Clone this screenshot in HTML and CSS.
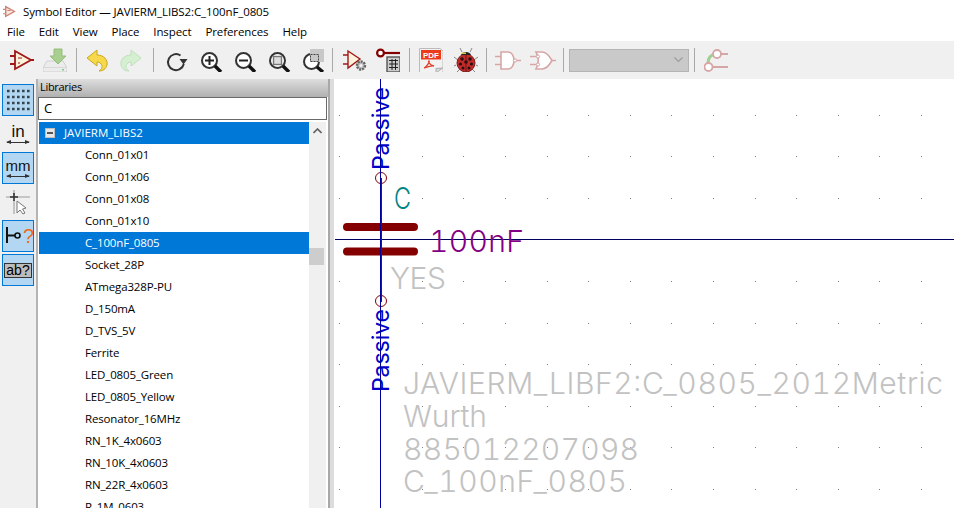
FILE: index.html
```html
<!DOCTYPE html>
<html lang="en">
  <head>
    <meta charset="UTF-8" />
    <title>Symbol Editor</title>
    <link rel="stylesheet" href="styles.css">
  </head>
  <body>
    <div class="titlebar">
      <svg class="app-icon" width="13" height="13" viewBox="0 0 12 12">
        <path d="M2.5 1.5 10.5 6 2.5 10.5Z" fill="#fbe6dc" stroke="#cc8478" stroke-width="1.3" />
        <path d="M0 4H2.5M0 8H2.5M4 5H7" stroke="#cc8478" />
      </svg>
      <span>Symbol Editor — JAVIERM_LIBS2:C_100nF_0805</span>
    </div>
    <div class="menubar">
      <span>File</span>
      <span>Edit</span>
      <span>View</span>
      <span>Place</span>
      <span>Inspect</span>
      <span>Preferences</span>
      <span>Help</span>
    </div>
    <div class="toolbar">
      <svg class="tool" viewBox="0 0 24 24">
        <path d="M5 3 21 12 5 21Z" fill="#fdf3dc" stroke="#a01818" stroke-width="1.8" />
        <path d="M0 8H5M0 16H5M21 12H24" stroke="#a01818" stroke-width="1.8" />
        <path d="M8 10H12M8 15H10" stroke="#a01818" />
      </svg>
      <svg class="tool g9" viewBox="0 0 24 24">
        <path d="M4 13H20L24 20V24H0V20Z" fill="#ececec" stroke="#cfcfcf" />
        <path d="M1 19.5H23" stroke="#d8d8d8" />
        <rect x="19" y="21" width="2" height="1.5" fill="#7fce7f" />
        <path d="M11 1H19V8H23L15 16 7 8H11Z" fill="#a9cf8f" stroke="#96bd80" />
      </svg>
      <i class="sep mr7"></i>
      <svg class="tool" viewBox="0 0 24 24">
        <path d="M3 10 13 2V7C20 7 24 12 23 17 22 21 19 23 15 23 18 21 19 18 17 16 16 14 14 14 13 14V18Z" fill="#f6d84a" stroke="#c8a820" />
      </svg>
      <svg class="tool g12" viewBox="0 0 24 24">
        <path d="M21 10 11 2V7C4 7 0 12 1 17 2 21 5 23 9 23 6 21 5 18 7 16 8 14 10 14 11 14V18Z" fill="#d4f0d0" stroke="#bfe0bc" />
      </svg>
      <i class="sep mr10"></i>
      <svg class="tool" viewBox="0 0 24 24">
        <path d="M16.5 7.5A8 8 0 1 0 19.8 16" fill="none" stroke="#333" stroke-width="2" />
        <path d="M15.5 11H23.5L19.5 16.5Z" fill="#333" />
      </svg>
      <svg class="tool g11" viewBox="0 0 24 24">
        <circle cx="10.5" cy="12.5" r="7.5" fill="#fff" stroke="#333" stroke-width="2" />
        <path d="M16 18 22 24" stroke="#111" stroke-width="3.4" />
        <path d="M6 12.5H15M10.5 8V17" stroke="#222" stroke-width="2" />
      </svg>
      <svg class="tool g10" viewBox="0 0 24 24">
        <circle cx="10.5" cy="12.5" r="7.5" fill="#fff" stroke="#333" stroke-width="2" />
        <path d="M16 18 22 24" stroke="#111" stroke-width="3.4" />
        <path d="M6 12.5H15" stroke="#222" stroke-width="2" />
      </svg>
      <svg class="tool g10" viewBox="0 0 24 24">
        <circle cx="10.5" cy="12.5" r="7.5" fill="#fff" stroke="#333" stroke-width="2" />
        <path d="M16 18 22 24" stroke="#111" stroke-width="3.4" />
        <rect x="6.5" y="8.5" width="8" height="8" fill="#ddd" stroke="#777" stroke-width="1.4" />
      </svg>
      <svg class="tool g11" viewBox="0 0 24 24">
        <circle cx="9.5" cy="13.5" r="7.5" fill="#fff" stroke="#333" stroke-width="2" />
        <path d="M15 19 21 24" stroke="#111" stroke-width="3.4" />
        <rect x="8" y="1" width="14" height="13" fill="#c8c8c8" />
        <rect x="8.5" y="6.5" width="8" height="7" fill="none" stroke="#444" stroke-dasharray="2 1" />
      </svg>
      <i class="sep ml6 mr10"></i>
      <svg class="tool" viewBox="0 0 24 24">
        <path d="M5 3 17 11 5 20Z" fill="#fdf3dc" stroke="#a01818" stroke-width="1.4" />
        <path d="M0 7H5M0 16H5" stroke="#a01818" stroke-width="1.4" />
        <circle cx="18" cy="17.5" r="4" fill="#bbb" stroke="#666" stroke-width="2.4" stroke-dasharray="2 1" />
        <circle cx="18" cy="17.5" r="1.6" fill="#f0f0f0" />
      </svg>
      <svg class="tool g9" viewBox="0 0 24 24">
        <circle cx="4.5" cy="5" r="3.4" fill="#fff" stroke="#840000" stroke-width="2.2" />
        <path d="M8 5H24" stroke="#840000" stroke-width="2.2" />
        <rect x="11" y="9" width="13" height="15" fill="#ccc" stroke="#555" stroke-width="1.4" />
        <path d="M13 12.5H22M13 16H22M13 19.5H22M16 11V22M19.5 11V22" stroke="#222" />
      </svg>
      <i class="sep"></i>
      <svg class="tool" viewBox="0 0 24 24">
        <path d="M.5 .5H21L24 3V25H.5Z" fill="#f2f2f2" stroke="#bbb" />
        <rect x="2" y="2" width="20" height="9.5" fill="#ec3a1c" />
        <text class="pdf-label" x="12" y="10">PDF</text>
        <path d="M5 20C8 19 11 13 10 13 9 13 10 17 15 18 12 17 8 19 5 20Z" fill="none" stroke="#e0402a" stroke-width="1.3" />
        <path d="M17 25V20.5L23.5 20Z" fill="#ddd" stroke="#aaa" />
      </svg>
      <svg class="tool g11" viewBox="0 0 24 24">
        <path d="M4 12 0 9M2 17 0 18M6 21 3 24M20 12 24 9M22 17 24 18M18 21 21 24M8 4 6 0M16 4 18 0" stroke="#888" />
        <ellipse cx="12" cy="15" rx="9" ry="9" fill="#c42a2a" stroke="#7a2020" />
        <path d="M7 7C8 3 16 3 17 7Z" fill="#222" />
        <path d="M8 4.5H12V6H8Z" fill="#d8c84a" />
        <path d="M12 7V24" stroke="#6a1818" />
        <g fill="#2a1010">
          <circle cx="8" cy="11" r="1.8" />
          <circle cx="16" cy="11" r="1.8" />
          <circle cx="6.5" cy="16" r="1.6" />
          <circle cx="17.5" cy="16" r="1.6" />
          <circle cx="12" cy="14" r="1.8" />
          <circle cx="9" cy="20" r="1.5" />
          <circle cx="15" cy="20" r="1.5" />
        </g>
      </svg>
      <i class="sep ml8 mr8"></i>
      <svg class="tool wide" viewBox="0 0 26 24">
        <path d="M6 4H13C21 4 21 21 13 21H6Z" fill="#fff" stroke="#d6a6a6" stroke-width="1.6" />
        <path d="M0 8.5H6M0 16.5H6M21 12.5H26" stroke="#d6a6a6" stroke-width="1.6" />
        <circle cx="20" cy="12.5" r="1.6" fill="#fff" stroke="#d6a6a6" />
      </svg>
      <svg class="tool wide g9" viewBox="0 0 26 24">
        <path d="M6 4H12C17 4 20 9 22 12.5 20 16 17 21 12 21H6C9 16 9 9 6 4Z" fill="#fff" stroke="#d6a6a6" stroke-width="1.6" />
        <path d="M0 8.5H7M0 16.5H7M22 12.5H26" stroke="#d6a6a6" stroke-width="1.6" />
        <circle cx="8" cy="8.5" r="1.6" fill="#fff" stroke="#d6a6a6" />
        <circle cx="8" cy="16.5" r="1.6" fill="#fff" stroke="#d6a6a6" />
      </svg>
      <i class="sep ml7 mr5"></i>
      <div class="combo">
        <svg width="9" height="6" viewBox="0 0 9 6"><path d="M.5 .5 4.5 4.5 8.5 .5" fill="none" stroke="#9c9c9c" stroke-width="1.2" /></svg>
      </div>
      <i class="sep ml5"></i>
      <svg class="tool" viewBox="0 0 24 24">
        <path d="M4 15C4 10 7 7 11 6" fill="none" stroke="#a0d090" stroke-width="3" />
        <circle cx="13" cy="6" r="4" fill="#fff" stroke="#d6a6a6" stroke-width="1.8" />
        <circle cx="4.5" cy="19" r="4" fill="#fff" stroke="#d6a6a6" stroke-width="1.8" />
        <path d="M17 6H24M8.5 19H24" stroke="#d6a6a6" stroke-width="1.8" />
      </svg>
    </div>
    <div class="main">
      <div class="lefttools">
        <div class="side-btn on">
          <svg width="24" height="24" viewBox="0 0 24 24">
            <path d="M1 3H24M1 9H24M1 15H24M1 21H24" stroke="#33434f" stroke-width="2.6" stroke-dasharray="2.6 2.4" />
          </svg>
        </div>
        <div class="side-btn unit"><b class="in">in</b><i class="arrows"></i></div>
        <div class="side-btn unit on"><b>mm</b><i class="arrows"></i></div>
        <div class="side-btn">
          <svg width="26" height="26" viewBox="0 0 26 26">
            <path d="M1 8H25M9 1V6M9 11V25" stroke="#b8b8b8" stroke-width="1.6" />
            <path d="M5 8H13M9 4V12" stroke="#333" stroke-width="1.6" />
            <path d="M12 12V24L15 21 18 25 20 24 17.5 20 21 19Z" fill="#fff" stroke="#777" />
          </svg>
        </div>
        <div class="side-btn on">
          <svg width="30" height="24" viewBox="0 0 30 24">
            <path d="M4 3V19M4 11.5H12" stroke="#111" stroke-width="2" />
            <circle cx="14.5" cy="11.5" r="2.5" fill="none" stroke="#111" stroke-width="1.6" />
            <text class="pin-q" x="20" y="19">?</text>
          </svg>
        </div>
        <div class="side-btn on"><span class="abq">ab?</span></div>
      </div>
      <div class="panel">
        <div class="panel-head">Libraries</div>
        <div class="search">C</div>
        <div class="tree">
          <div class="rows">
            <div class="row root sel"><i class="minus"></i>JAVIERM_LIBS2</div>
            <div class="row">Conn_01x01</div>
            <div class="row">Conn_01x06</div>
            <div class="row">Conn_01x08</div>
            <div class="row">Conn_01x10</div>
            <div class="row sel">C_100nF_0805</div>
            <div class="row">Socket_28P</div>
            <div class="row">ATmega328P-PU</div>
            <div class="row">D_150mA</div>
            <div class="row">D_TVS_5V</div>
            <div class="row">Ferrite</div>
            <div class="row">LED_0805_Green</div>
            <div class="row">LED_0805_Yellow</div>
            <div class="row">Resonator_16MHz</div>
            <div class="row">RN_1K_4x0603</div>
            <div class="row">RN_10K_4x0603</div>
            <div class="row">RN_22R_4x0603</div>
            <div class="row">R_1M_0603</div>
          </div>
          <div class="scroll">
            <svg class="scroll-up" width="9" height="6" viewBox="0 0 9 6"><path d="M.5 5 4.5 1 8.5 5" fill="none" stroke="#606060" stroke-width="1.6" /></svg>
            <div class="thumb"></div>
          </div>
        </div>
      </div>
      <i class="sash"></i>
      <svg class="canvas" viewBox="334 79 620 429" width="620" height="429">
        <defs>
          <g id="dots">
            <rect x="339" width="1" height="1" /><rect x="422" width="1" height="1" />
            <rect x="463" width="1" height="1" /><rect x="505" width="1" height="1" />
            <rect x="547" width="1" height="1" /><rect x="588" width="1" height="1" />
            <rect x="630" width="1" height="1" /><rect x="671" width="1" height="1" />
            <rect x="713" width="1" height="1" /><rect x="755" width="1" height="1" />
            <rect x="796" width="1" height="1" /><rect x="838" width="1" height="1" />
            <rect x="879" width="1" height="1" /><rect x="921" width="1" height="1" />
          </g>
        </defs>
        <g class="grid">
          <use href="#dots" y="115" /><use href="#dots" y="156" /><use href="#dots" y="198" />
          <use href="#dots" y="239" /><use href="#dots" y="281" /><use href="#dots" y="323" />
          <use href="#dots" y="364" /><use href="#dots" y="406" /><use href="#dots" y="447" />
          <use href="#dots" y="489" />
        </g>
        <path d="M335 239.5H954" stroke="#000060" />
        <path d="M381 178V302" stroke="#840000" stroke-width="2" />
        <path d="M347 227H414M347 251.6H414" stroke="#840000" stroke-width="8" stroke-linecap="round" />
        <circle cx="381" cy="178" r="5.5" fill="none" stroke="#840000" />
        <circle cx="381" cy="301" r="5.5" fill="none" stroke="#840000" />
        <text class="pin-type" transform="translate(388.5 170) rotate(-90)" textLength="83" lengthAdjust="spacing">Passive</text>
        <text class="pin-type" transform="translate(388.5 392) rotate(-90)" textLength="83" lengthAdjust="spacing">Passive</text>
        <path d="M380.5 79V508" stroke="#0000a0" />
        <text class="field ref" x="394" y="209" textLength="17" lengthAdjust="spacingAndGlyphs">C</text>
        <text class="field val" x="429" y="252" textLength="95" lengthAdjust="spacing">100nF</text>
        <text class="field dim" x="390" y="289" textLength="56" lengthAdjust="spacing">YES</text>
        <text class="field dim" x="403" y="394" textLength="540" lengthAdjust="spacing">JAVIERM_LIBF2:C_0805_2012Metric</text>
        <text class="field dim" x="403" y="427" textLength="84" lengthAdjust="spacing">Wurth</text>
        <text class="field dim" x="403" y="460" textLength="236" lengthAdjust="spacing">885012207098</text>
        <text class="field dim" x="403" y="492" textLength="224" lengthAdjust="spacing">C_100nF_0805</text>
      </svg>
    </div>
  </body>
</html>
```

FILE: styles.css
```css
body {
  margin: 0;
  width: 954px;
  height: 508px;
  overflow: hidden;
  background: #fff;
  color: #000;
  font-family: "Open Sans", "Noto Sans", sans-serif;
  font-size: 11.5px;
  display: flex;
  flex-direction: column;
}

.titlebar {
  height: 22px;
  display: flex;
  align-items: center;
  gap: 7px;
  padding-left: 3px;
  letter-spacing: -0.1px;
}

.menubar {
  height: 19px;
  display: flex;
  align-items: center;
  gap: 14px;
  padding-left: 7px;
  letter-spacing: -0.1px;
}

.toolbar {
  height: 38px;
  background: #f0f0f0;
  display: flex;
  align-items: center;
  padding-left: 10px;
}

.tool {
  width: 24px;
  height: 24px;
  flex: none;
}

.tool.wide {
  width: 26px;
}

.g9 {
  margin-left: 9px;
}

.g10 {
  margin-left: 10px;
}

.g11 {
  margin-left: 11px;
}

.g12 {
  margin-left: 12px;
}

.sep {
  width: 1px;
  height: 24px;
  background: #a8a8a8;
  margin: 0 9px;
  flex: none;
}

.ml5 {
  margin-left: 5px;
}

.ml6 {
  margin-left: 6px;
}

.ml7 {
  margin-left: 7px;
}

.ml8 {
  margin-left: 8px;
}

.mr5 {
  margin-right: 5px;
}

.mr7 {
  margin-right: 7px;
}

.mr8 {
  margin-right: 8px;
}

.mr10 {
  margin-right: 10px;
}

.pdf-label {
  font-family: "Liberation Sans", sans-serif;
  font-size: 8px;
  font-weight: bold;
  fill: #fff;
  text-anchor: middle;
}

.combo {
  width: 120px;
  height: 23px;
  box-sizing: border-box;
  background: #c9c9c9;
  border: 1px solid #b4b4b4;
  display: flex;
  align-items: center;
  justify-content: flex-end;
  padding-right: 5px;
}

.main {
  flex: 1;
  display: flex;
  min-height: 0;
}

.lefttools {
  width: 36px;
  flex: none;
  background: #f0f0f0;
  border-right: 2px solid #b4b4b4;
  display: flex;
  flex-direction: column;
  align-items: center;
  gap: 2px;
  padding-top: 5px;
}

.side-btn {
  width: 32px;
  height: 32px;
  box-sizing: border-box;
  display: flex;
  flex-direction: column;
  align-items: center;
  justify-content: center;
  flex: none;
}

.side-btn.on {
  background: #b3d7f3;
  border: 1px solid #0078d7;
}

.unit b {
  font-family: "Liberation Sans", sans-serif;
  font-weight: normal;
  font-size: 15px;
  line-height: 13px;
  color: #111;
}

.unit b.in {
  font-size: 17px;
}

.arrows {
  width: 22px;
  height: 1px;
  margin-top: 4px;
  background: #333;
  position: relative;
}

.arrows::before,
.arrows::after {
  content: "";
  position: absolute;
  top: -2px;
  border: 2.5px solid transparent;
}

.arrows::before {
  left: -1px;
  border-right: 5px solid #333;
  border-left: 0;
}

.arrows::after {
  right: -1px;
  border-left: 5px solid #333;
  border-right: 0;
}

.pin-q {
  font-family: "Liberation Sans", sans-serif;
  font-size: 20px;
  fill: #f06a1a;
}

.abq {
  font-family: "Liberation Sans", sans-serif;
  font-size: 14px;
  line-height: 13px;
  padding: 0 1px;
  background: #bcbcbc;
  border: 1px solid #333;
  color: #000;
}

.panel {
  width: 290px;
  flex: none;
  display: flex;
  flex-direction: column;
  border-right: 2px solid #a8a8a8;
}

.panel-head {
  height: 18px;
  line-height: 16px;
  font-size: 11px;
  padding-left: 2px;
  letter-spacing: -0.3px;
  background: linear-gradient(to bottom, #dedede, #b0b0b0);
}

.search {
  height: 23px;
  box-sizing: border-box;
  border: 1px solid #6a6a6a;
  background: #fff;
  font-size: 13px;
  line-height: 21px;
  padding-left: 5px;
  margin-right: 1px;
  flex: none;
}

.tree {
  flex: 1;
  display: flex;
  min-height: 0;
  padding: 2px 2px 0 1px;
  overflow: hidden;
}

.rows {
  width: 270px;
  flex: none;
}

.row {
  height: 22px;
  line-height: 22px;
  padding-left: 46px;
  letter-spacing: -0.15px;
}

.row.root {
  padding-left: 6px;
  display: flex;
  align-items: center;
  gap: 9px;
  letter-spacing: 0;
}

.row.sel {
  background: #0078d7;
  color: #fff;
}

.minus {
  width: 8px;
  height: 8px;
  background: linear-gradient(#555, #555) center / 6px 2px no-repeat #e8e8e8;
  border: 1px solid #c0c0c0;
}

.scroll {
  width: 17px;
  flex: none;
  background: #f0f0f0;
  position: relative;
}

.scroll-up {
  position: absolute;
  left: 4px;
  top: 6px;
}

.thumb {
  position: absolute;
  left: 0;
  top: 126px;
  width: 15px;
  height: 17px;
  background: #cdcdcd;
}

.sash {
  width: 4px;
  background: #dcdcdc;
  flex: none;
}

.canvas {
  flex: none;
  display: block;
  background: #fff;
}

.grid {
  fill: #808080;
  shape-rendering: crispEdges;
}

.pin-type {
  font-family: "Inter", sans-serif;
  font-size: 23px;
  fill: #0000c8;
}

.field {
  font-family: "Inter", sans-serif;
  font-size: 30px;
  font-weight: 300;
  font-variant-numeric: tabular-nums;
}

.ref {
  fill: #008484;
}

.val {
  fill: #840084;
}

.dim {
  fill: #c2c2c2;
}
```
